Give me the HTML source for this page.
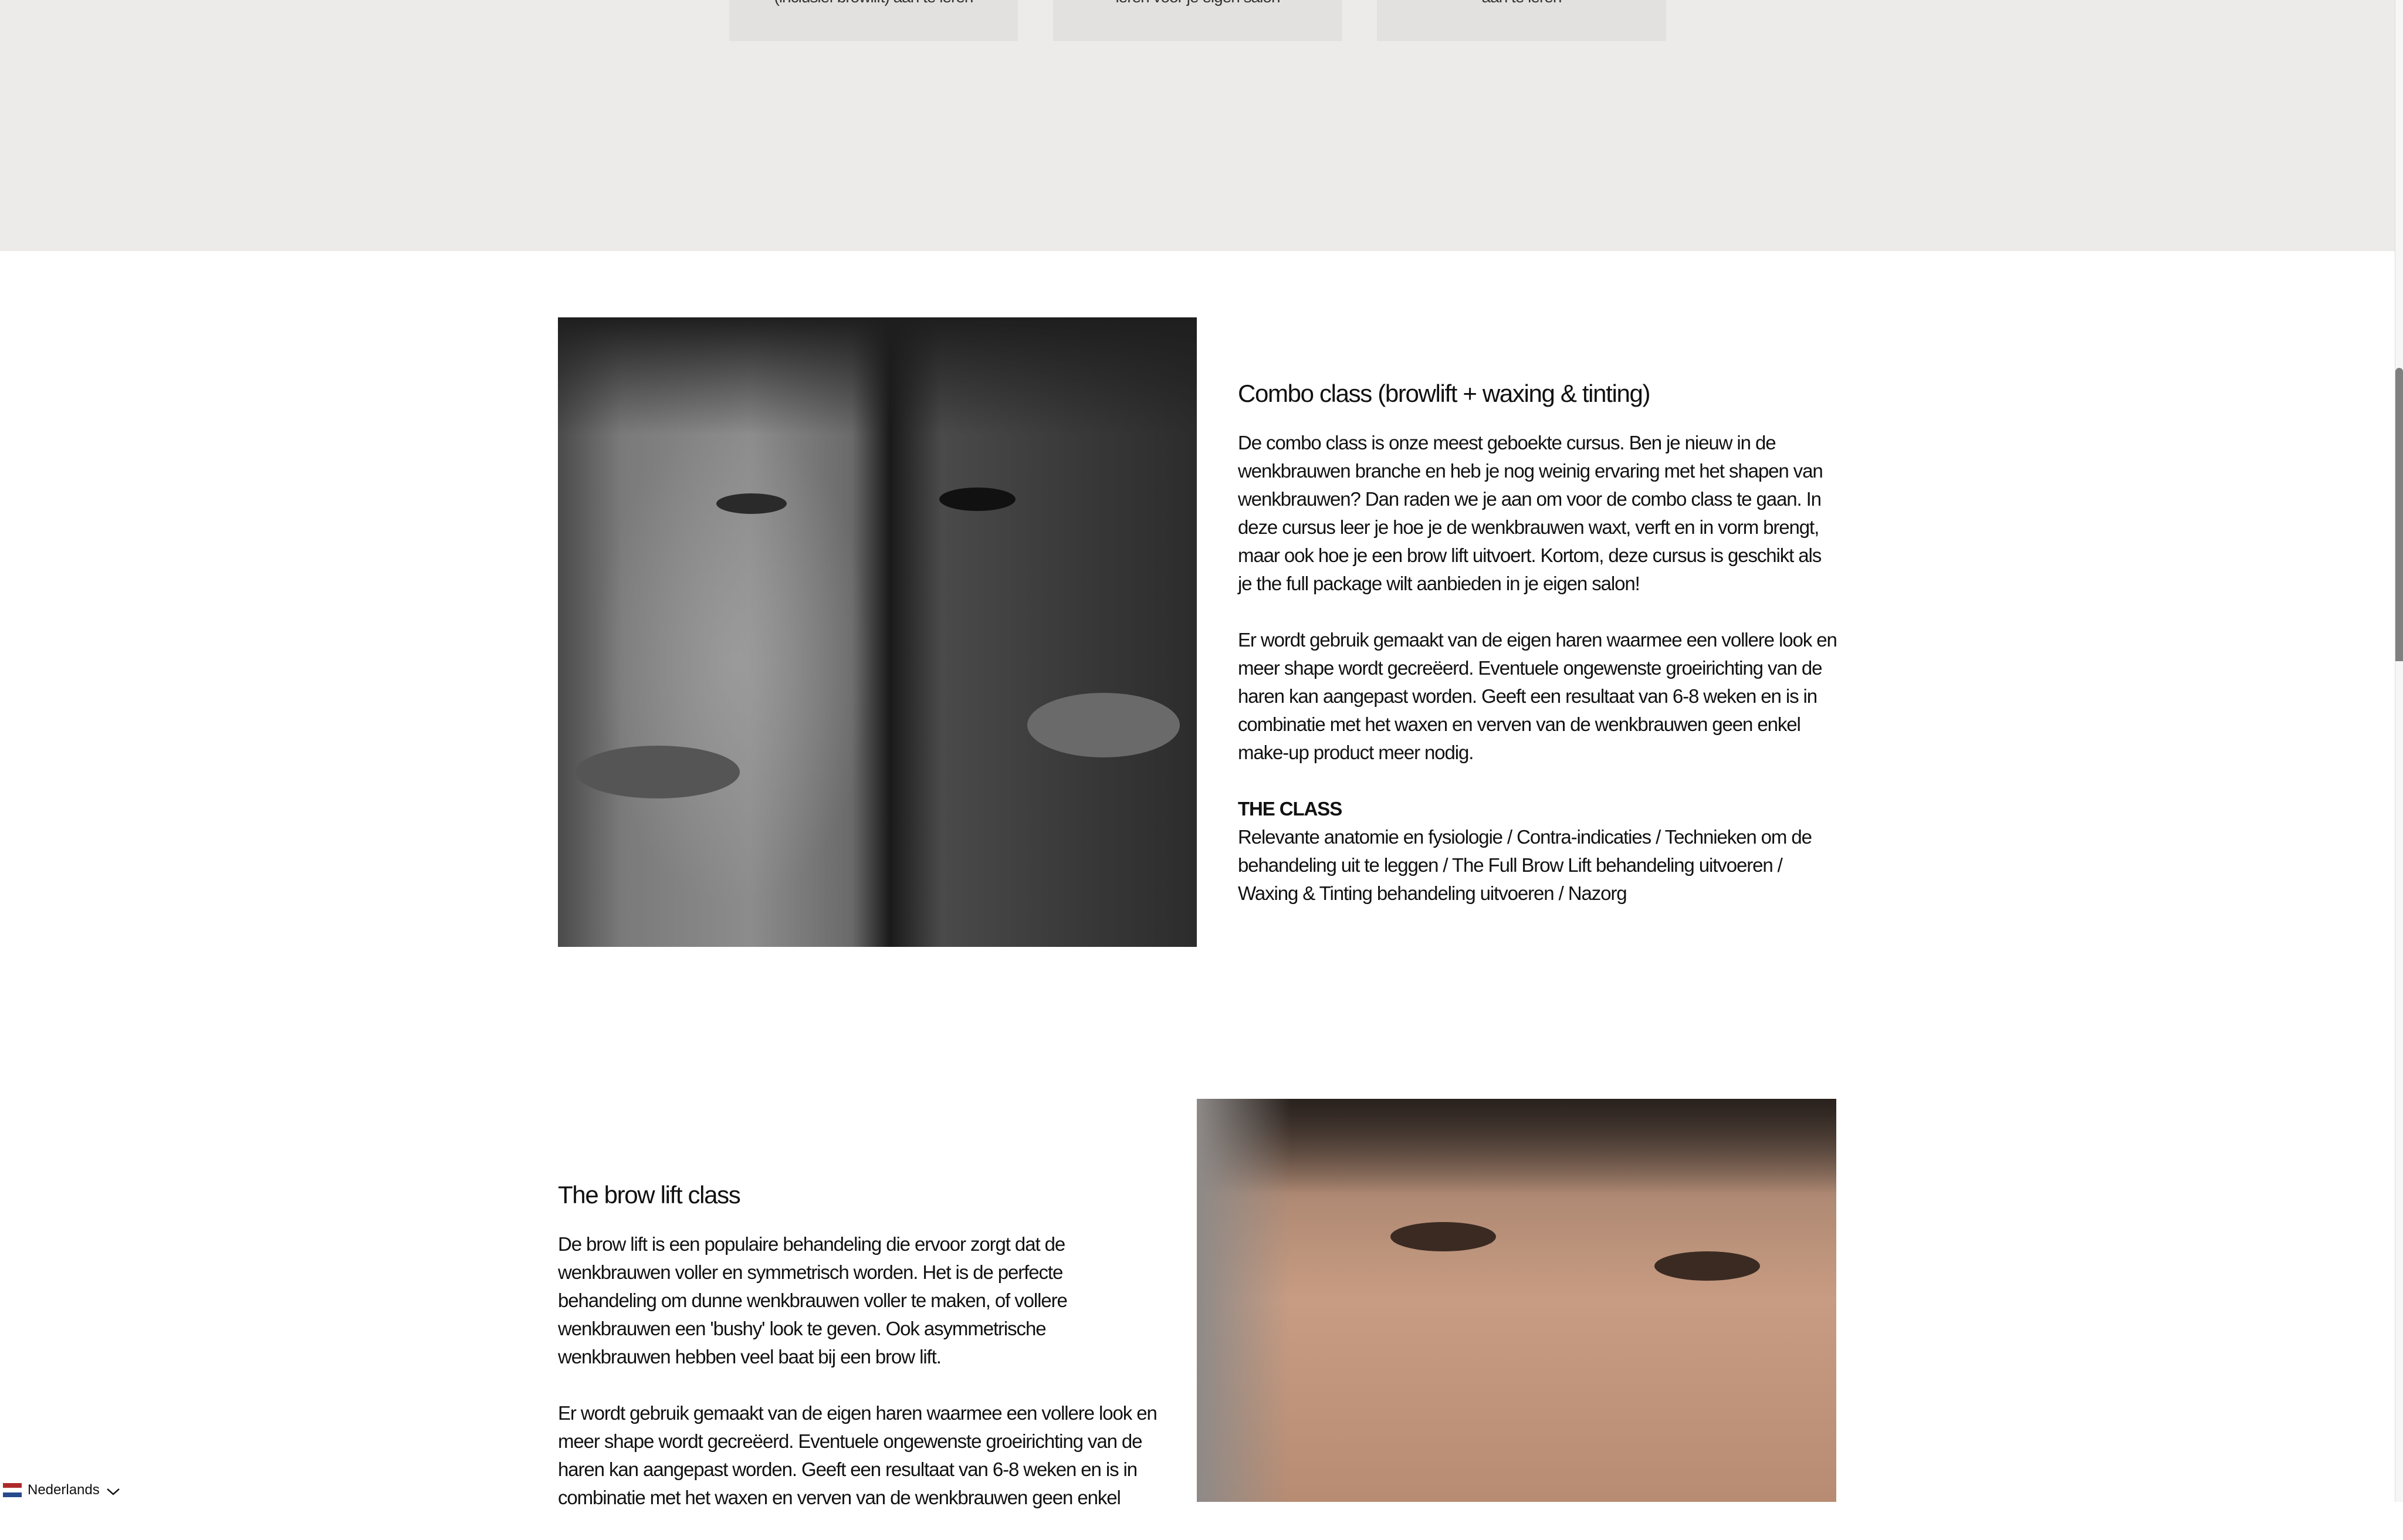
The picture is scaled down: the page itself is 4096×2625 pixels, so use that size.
<!DOCTYPE html>
<html><head><meta charset="utf-8">
<style>
html,body{margin:0;padding:0}
body{width:4096px;height:2560px;position:relative;overflow:hidden;background:#fff;font-family:"Liberation Sans",Arial,sans-serif;color:#111}
.band{position:absolute;left:0;top:0;width:4082px;height:428px;background:#ecebe9}
.card{position:absolute;top:0;height:70px;background:#e2e1df;overflow:hidden;text-align:center;font-size:28px;color:#333}
.card span{position:absolute;left:0;right:0;top:-22px;line-height:34px;white-space:nowrap;letter-spacing:-1px}
.img{position:absolute;overflow:hidden}
h2{position:absolute;margin:0;font-weight:normal;font-size:42px;line-height:50px;white-space:nowrap;letter-spacing:-1.35px}
.txt{position:absolute;font-size:33px;line-height:48px;white-space:nowrap;letter-spacing:-1.1px}
.txt p{margin:0 0 48px 0}
.scroll{position:absolute;left:4082px;top:0;width:14px;height:2560px;background:#f6f6f6;border-left:1px solid #ddd}
.thumb{position:absolute;left:4083px;top:627px;width:13px;height:500px;background:#808080;border-radius:7px 7px 0 0}
</style></head><body>
<div class="band"></div>
<div class="card" style="left:1243px;width:492px"><span>(inclusief browlift) aan te leren</span></div>
<div class="card" style="left:1795px;width:493px"><span>leren voor je eigen salon</span></div>
<div class="card" style="left:2347px;width:493px"><span>aan te leren</span></div>

<div class="img" style="left:951px;top:541px;width:1089px;height:1073px;background:linear-gradient(90deg,#4a4a4a 0%,#7a7a7a 10%,#8c8c8c 30%,#6a6a6a 46%,#1a1a1a 52%,#4a4a4a 60%,#3a3a3a 80%,#2c2c2c 100%)">
 <div style="position:absolute;left:20px;top:100px;width:560px;height:973px;background:radial-gradient(ellipse at 50% 50%,rgba(170,170,170,.5),rgba(0,0,0,0) 60%)"></div>
 <div style="position:absolute;left:0;top:0;width:1089px;height:200px;background:linear-gradient(#1e1e1e,rgba(0,0,0,0))"></div>
 <div style="position:absolute;left:270px;top:300px;width:120px;height:35px;border-radius:50%;background:#2a2a2a"></div>
 <div style="position:absolute;left:650px;top:290px;width:130px;height:40px;border-radius:50%;background:#111"></div>
 <div style="position:absolute;left:30px;top:730px;width:280px;height:90px;border-radius:50%;background:#555"></div>
 <div style="position:absolute;left:800px;top:640px;width:260px;height:110px;border-radius:50%;background:#6a6a6a"></div>
</div>

<h2 style="left:2110px;top:646px">Combo class (browlift + waxing &amp; tinting)</h2>
<div class="txt" style="left:2110px;top:731px">
<p>De combo class is onze meest geboekte cursus. Ben je nieuw in de<br>wenkbrauwen branche en heb je nog weinig ervaring met het shapen van<br>wenkbrauwen? Dan raden we je aan om voor de combo class te gaan. In<br>deze cursus leer je hoe je de wenkbrauwen waxt, verft en in vorm brengt,<br>maar ook hoe je een brow lift uitvoert. Kortom, deze cursus is geschikt als<br>je the full package wilt aanbieden in je eigen salon!</p>
<p>Er wordt gebruik gemaakt van de eigen haren waarmee een vollere look en<br>meer shape wordt gecreëerd. Eventuele ongewenste groeirichting van de<br>haren kan aangepast worden. Geeft een resultaat van 6-8 weken en is in<br>combinatie met het waxen en verven van de wenkbrauwen geen enkel<br>make-up product meer nodig.</p>
<p><b>THE CLASS</b><br>Relevante anatomie en fysiologie / Contra-indicaties / Technieken om de<br>behandeling uit te leggen / The Full Brow Lift behandeling uitvoeren /<br>Waxing &amp; Tinting behandeling uitvoeren / Nazorg</p>
</div>

<div class="img" style="left:2040px;top:1873px;width:1090px;height:687px;background:linear-gradient(180deg,#5a4a40 0%,#b08a74 25%,#c89c82 50%,#b88c72 100%)">
 <div style="position:absolute;left:0;top:0;width:1090px;height:160px;background:linear-gradient(#2a221e,rgba(0,0,0,0))"></div>
 <div style="position:absolute;left:0;top:0;width:160px;height:687px;background:linear-gradient(90deg,#8e8a88,rgba(0,0,0,0))"></div>
 <div style="position:absolute;left:330px;top:210px;width:180px;height:50px;border-radius:50%;background:#3a2a22"></div>
 <div style="position:absolute;left:780px;top:260px;width:180px;height:50px;border-radius:50%;background:#3a2a22"></div>
</div>

<h2 style="left:951px;top:2012px">The brow lift class</h2>
<div class="txt" style="left:951px;top:2097px">
<p>De brow lift is een populaire behandeling die ervoor zorgt dat de<br>wenkbrauwen voller en symmetrisch worden. Het is de perfecte<br>behandeling om dunne wenkbrauwen voller te maken, of vollere<br>wenkbrauwen een 'bushy' look te geven. Ook asymmetrische<br>wenkbrauwen hebben veel baat bij een brow lift.</p>
<p>Er wordt gebruik gemaakt van de eigen haren waarmee een vollere look en<br>meer shape wordt gecreëerd. Eventuele ongewenste groeirichting van de<br>haren kan aangepast worden. Geeft een resultaat van 6-8 weken en is in<br>combinatie met het waxen en verven van de wenkbrauwen geen enkel</p>
</div>

<div style="position:absolute;left:5px;top:2528px;width:32px;height:24px">
 <div style="height:8px;background:#ae2a2a"></div><div style="height:8px;background:#fff"></div><div style="height:8px;background:#264a8c"></div>
</div>
<div style="position:absolute;left:47px;top:2526px;font-size:24px;line-height:28px;color:#111;background:#fff">Nederlands</div>
<svg style="position:absolute;left:181px;top:2535px" width="24" height="16" viewBox="0 0 24 16"><path d="M2 3 L12 12 L22 3" fill="none" stroke="#111" stroke-width="2.5"/></svg>

<div class="scroll"></div>
<div class="thumb"></div>
</body></html>
